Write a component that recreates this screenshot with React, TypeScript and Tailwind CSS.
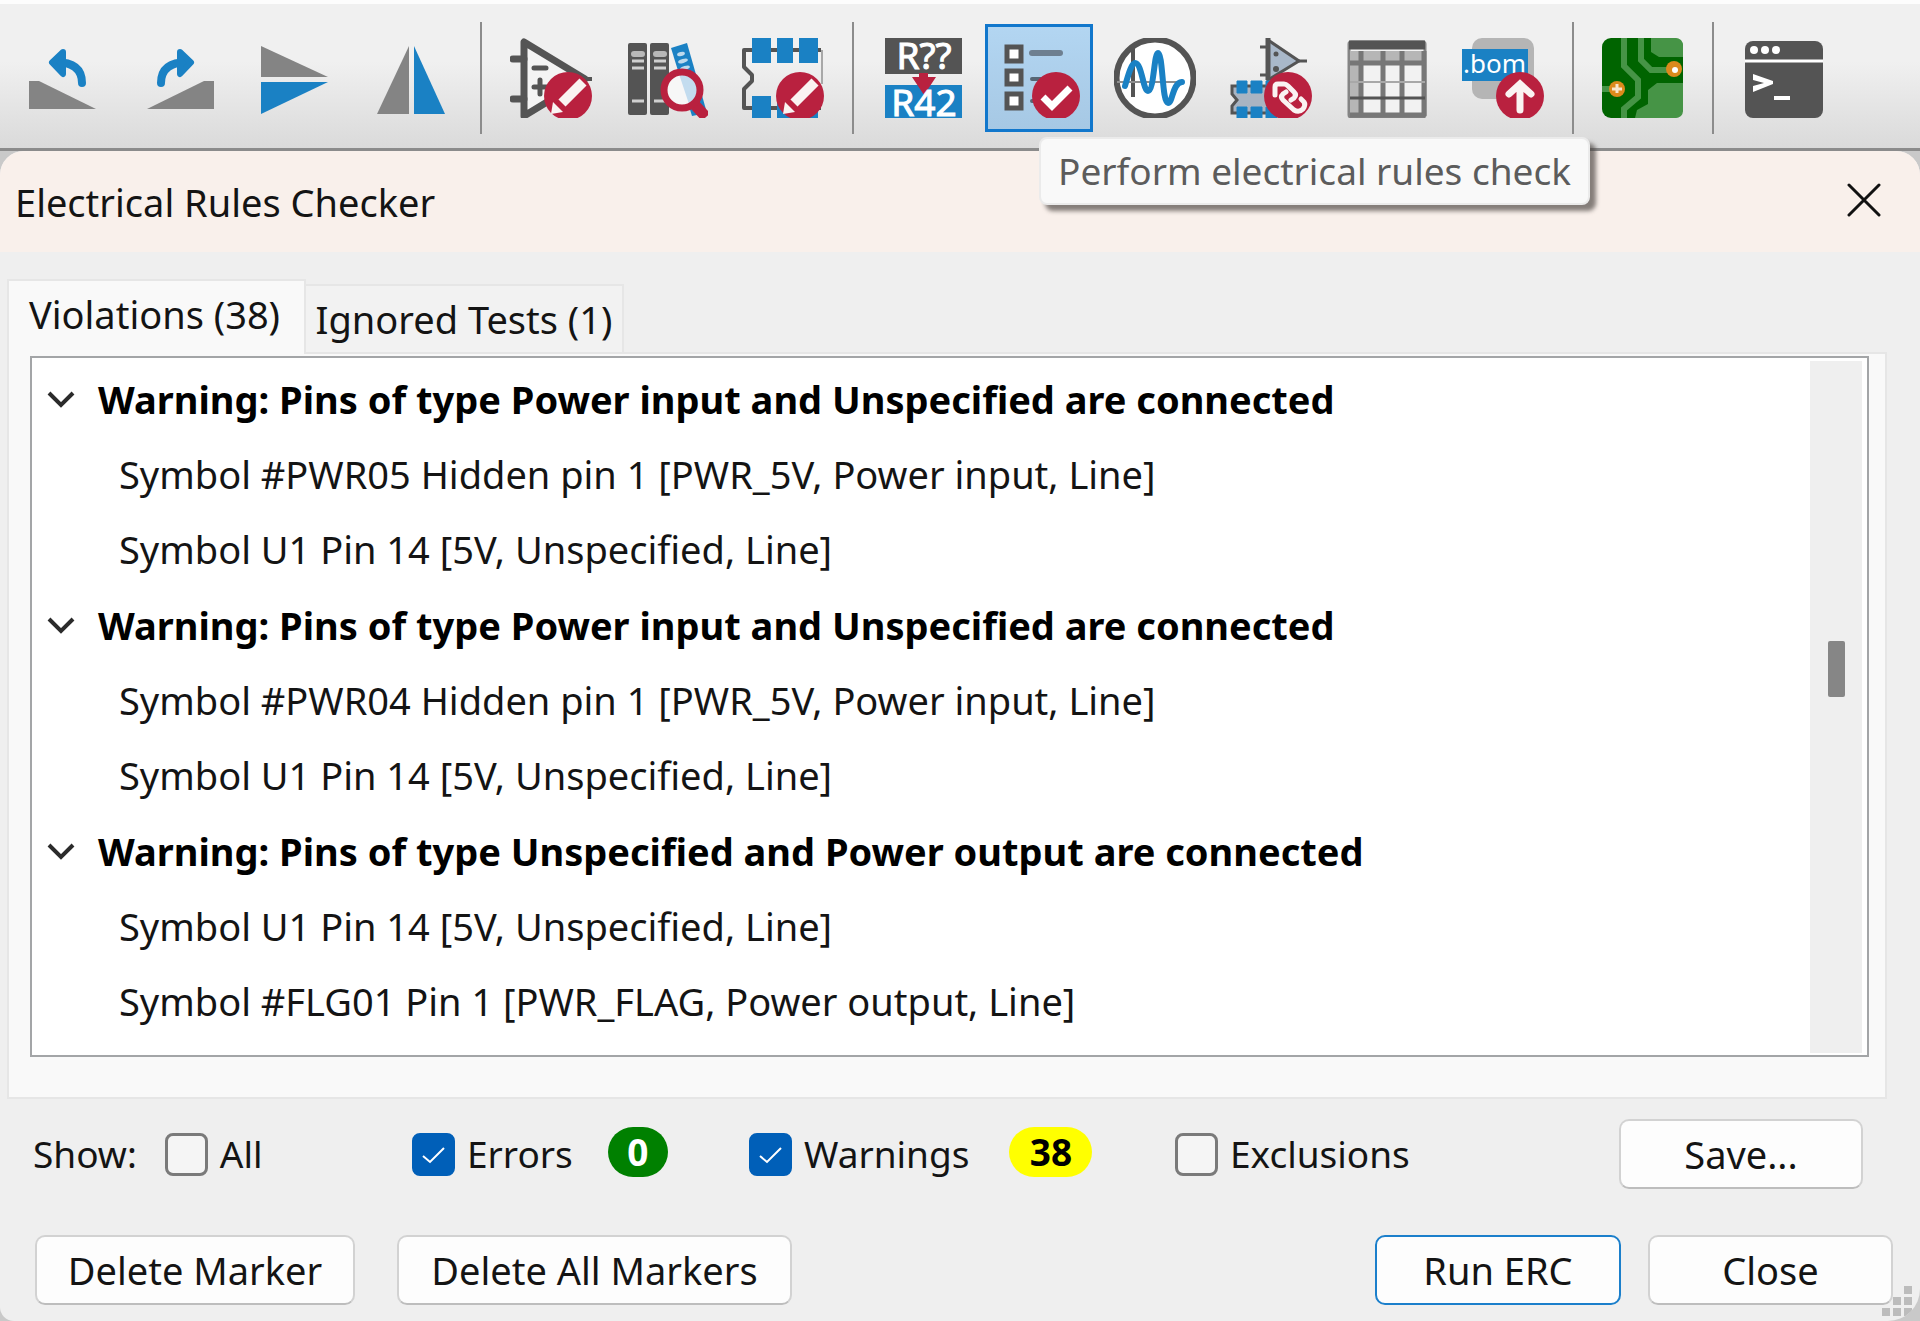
import { useState, type ReactNode } from "react";

const BLUE = "#1a81c4";
const DARK = "#545454";
const GREY = "#848484";
const RED = "#b9213f";

function Glyph({ children, overflow = "hidden" }: { children: ReactNode; overflow?: "hidden" | "visible" }) {
  return (
    <svg width="82" height="80" viewBox="13 14 82 80" fill="none" overflow={overflow} aria-hidden="true">
      {children}
    </svg>
  );
}

function Badge({ children }: { children: ReactNode }) {
  return (
    <>
      <circle cx="71" cy="72" r="24" fill={RED} />
      {children}
    </>
  );
}

function Pencil() {
  return (
    <Badge>
      <path d="M65 79 L86 58" stroke="#faf3f2" strokeWidth="10" />
      <path d="M54 90 L56 78 L66 88 Z" fill="#faf3f2" />
      <path d="M58 76 L69 87" stroke={RED} strokeWidth="2" />
    </Badge>
  );
}

function RotateShape() {
  return (
    <>
      <path d="M20 57 H30 L87 85 H20 Z" fill={GREY} />
      <path d="M73 59 C73 45 64 38 46 38" stroke={BLUE} strokeWidth="8" strokeLinecap="round" />
      <path d="M54 28 L43 38.5 L54 50 Z" fill={BLUE} stroke={BLUE} strokeWidth="6" strokeLinejoin="round" />
    </>
  );
}

const glyphs: Record<string, ReactNode> = {
  ccw: <RotateShape />,
  cw: (
    <g transform="matrix(-1 0 0 1 109 0)">
      <RotateShape />
    </g>
  ),
  mirrorV: (
    <>
      <path d="M20 22 L87 53 H20 Z" fill={GREY} />
      <path d="M20 58 H87 L20 90 Z" fill={BLUE} />
    </>
  ),
  mirrorH: (
    <>
      <path d="M52 22 V90 H20 Z" fill={GREY} />
      <path d="M57 22 V90 H88 Z" fill={BLUE} />
    </>
  ),
  symbols: (
    <>
      <path d="M27 18 V92 L88 55 Z" fill="#f4f4f4" stroke={DARK} strokeWidth="7" strokeLinejoin="round" />
      <path d="M16 35 H27 M16 75 H27" stroke={DARK} strokeWidth="7" strokeLinecap="round" />
      <path d="M37 44 H49 M37 63 H50 M43 56 V70" stroke={DARK} strokeWidth="5" strokeLinecap="round" />
      <path d="M86 55 H95" stroke={DARK} strokeWidth="4" />
      <Pencil />
    </>
  ),
  library: (
    <>
      <rect x="15" y="19" width="19" height="72" rx="2" fill={DARK} />
      <rect x="37" y="19" width="19" height="72" rx="2" fill={DARK} />
      <path d="M21 30 H29 M43 30 H51" stroke="#b8b8b8" strokeWidth="6" strokeLinecap="round" />
      <path d="M19 37 H31 M19 44 H31 M19 77 H31 M41 37 H53 M41 44 H53 M41 77 H53" stroke="#d0d0d0" strokeWidth="3" />
      <path d="M58 24 L74 19 L94 89 L79 92 Z" fill={BLUE} />
      <g fill="#bcd9ec">
        <ellipse cx="68" cy="30" rx="4" ry="2" transform="rotate(-16 68 30)" />
        <ellipse cx="70" cy="37" rx="5" ry="2" transform="rotate(-16 70 37)" />
        <ellipse cx="72" cy="44" rx="5" ry="2" transform="rotate(-16 72 44)" />
      </g>
      <path d="M81 80 L93 93" stroke={RED} strokeWidth="11" />
      <circle cx="69" cy="66" r="18" fill="#f7f7f7" />
      <path d="M66 50 A16 16 0 0 1 76 80 Z" fill="#c3dcef" />
      <circle cx="69" cy="66" r="18" stroke={RED} strokeWidth="7" />
    </>
  ),
  footprints: (
    <>
      <path d="M92 26 H15 V43 L23 51 V57 L15 65 V84 H92" stroke={DARK} strokeWidth="4" strokeLinejoin="round" />
      <path d="M93 26 V60" stroke="#a8a8a8" strokeWidth="2" />
      <path d="M23 14 H42 V39 H23 Z M48 14 H64 V39 H48 Z M70 14 H89 V39 H70 Z" fill={BLUE} />
      <path d="M23 72 H42 V94 H23 Z M48 72 H64 V94 H48 Z M70 72 H89 V94 H70 Z" fill={BLUE} />
      <Pencil />
    </>
  ),
  annotate: (
    <>
      <rect x="16" y="14" width="77" height="36" fill={DARK} />
      <rect x="16" y="61" width="77" height="33" fill={BLUE} />
      <path d="M50 49 H59 V53 H67 L55 71 L43 53 H50 Z" fill={RED} />
      <g
        fill="#ffffff"
        stroke="#ffffff"
        fontFamily="'Noto Sans', 'Open Sans', sans-serif"
        fontSize="37"
        textAnchor="middle"
      >
        <text x="55" y="45">R??</text>
        <text x="55" y="92">R42</text>
      </g>
    </>
  ),
  erc: (
    <>
      <g stroke={DARK} strokeWidth="5" fill="#ffffff">
        <rect x="22" y="23" width="14" height="14" />
        <rect x="22" y="47" width="14" height="13" />
        <rect x="22" y="70" width="14" height="14" />
      </g>
      <path d="M47 29 H75" stroke="#6e7f90" strokeWidth="6" strokeLinecap="round" />
      <path d="M47 55 H66 M47 77 H66" stroke="#566675" strokeWidth="4" strokeLinecap="round" />
      <Badge>
        <path d="M58 73 L67 82 L85 64" stroke="#ffffff" strokeWidth="7" />
      </Badge>
    </>
  ),
  simulate: (
    <>
      <circle cx="54" cy="54" r="38.5" fill="#ffffff" stroke={DARK} strokeWidth="6" />
      <path d="M32 24 V73" stroke={DARK} strokeWidth="4" />
      <path d="M16 58 H82" stroke="#8e8e8e" strokeWidth="2" />
      <path
        d="M24 62 C27 52 30 40 34 39 C41 39 42 67 47 67 C53 67 53 29 57 29 C62 29 61 79 67 79 C72 79 71 59 81 58"
        stroke={BLUE}
        strokeWidth="6"
        strokeLinecap="round"
      />
    </>
  ),
  assign: (
    <>
      <path d="M51 16 V56 L82 37 Z" fill="#a9b8c9" stroke={DARK} strokeWidth="3" />
      <path d="M51 14 V56" stroke={DARK} strokeWidth="5" />
      <path d="M82 37 H90 M43 23 H51 M43 51 H51" stroke={DARK} strokeWidth="3" />
      <circle cx="59" cy="30" r="2.5" fill={DARK} />
      <circle cx="59" cy="45" r="3" fill={DARK} />
      <path d="M70 62 H15 V70 L20 76 L15 82 V89 H70 Z" fill="#a9b4c2" />
      <path d="M70 62 H15 V70 L20 76 L15 82 V89 H70" stroke={DARK} strokeWidth="3" />
      <path
        d="M20 57 H30 V69 H20 Z M34 57 H45 V69 H34 Z M49 57 H60 V69 H49 Z M20 83 H30 V94 H20 Z M34 83 H45 V94 H34 Z M49 83 H60 V94 H49 Z"
        fill={BLUE}
        stroke={BLUE}
      />
      <Badge>
        <g stroke="#faf3f2" strokeWidth="5" strokeLinecap="round">
          <path d="M58 71 V63 Q58 60 61 60 H67 Q69 60 71 62 L77 68 Q80 71 77 74 L74 76" />
          <path d="M84 75 L87 78 Q89 81 86 85 Q82 89 77 86 L66 76 Q63 73 66 70 L69 68" />
        </g>
      </Badge>
    </>
  ),
  table: (
    <>
      <rect x="16" y="18" width="76" height="75" rx="2" fill="#f2f2f2" stroke={GREY} strokeWidth="3" />
      <path d="M17 27 H91 V38 H17 Z M17 38 H27 V91 H17 Z" fill="#b6b6b6" />
      <path d="M16 21 H92" stroke={DARK} strokeWidth="9" />
      <path d="M28 27 V92 M50 27 V92 M69 27 V92 M91 27 V92" stroke="#777777" strokeWidth="5" />
      <path d="M17 39 H92 M17 91 H92" stroke="#777777" strokeWidth="5" />
      <path d="M17 58 H92" stroke="#a8a8a8" strokeWidth="2" />
      <path d="M17 74 H92" stroke={DARK} strokeWidth="3" />
    </>
  ),
  bom: (
    <>
      <rect x="23" y="14" width="62" height="61" rx="10" fill="#b5b5b5" />
      <rect x="13" y="25" width="66" height="32" fill={BLUE} />
      <text x="14" y="49" fill="#ffffff" fontFamily="'Noto Sans', 'Open Sans', sans-serif" fontSize="26">
        .bom
      </text>
      <Badge>
        <path d="M71 86 V61 M60 70 L71 60 L82 70" stroke="#faf3f2" strokeWidth="7" strokeLinecap="round" />
      </Badge>
    </>
  ),
  pcb: (
    <>
      <rect x="13" y="14" width="81" height="80" rx="9" fill="#006400" />
      <path
        d="M62 14 H86 Q94 14 94 22 V33 H70 L62 28 Z M94 59 H68 L59 66 V80 L48 86 L46 94 H86 Q94 94 94 86 Z"
        fill="#469446"
      />
      <path d="M35 14 V42 L49 56 V73 L35 85 V94 M52 14 V36 L62 46 H78 M13 65 H22" stroke="#469446" strokeWidth="6" />
      <circle cx="85" cy="45" r="8" fill="#dc8a1c" />
      <circle cx="28" cy="65" r="8" fill="#dc8a1c" />
      <circle cx="86" cy="46" r="3" fill="#ffffff" />
      <path d="M23 65 H33 M28 60 V69" stroke="#f8e6cc" strokeWidth="3" />
    </>
  ),
  terminal: (
    <>
      <rect x="16" y="17" width="78" height="77" rx="8" fill={DARK} />
      <g fill="#ffffff">
        <circle cx="25" cy="26" r="4" />
        <circle cx="36" cy="26" r="4" />
        <circle cx="47" cy="26" r="4" />
      </g>
      <path d="M16 37 H94" stroke="#ffffff" strokeWidth="3" />
      <path d="M24 50 L44 57 V60 L24 68 V62 L35 59 L24 56 Z" fill="#ffffff" />
      <path d="M45 74 H61" stroke="#ffffff" strokeWidth="4" />
    </>
  ),
};

const toolGroups: { id: string; label: string }[][] = [
  [
    { id: "ccw", label: "Rotate counterclockwise" },
    { id: "cw", label: "Rotate clockwise" },
    { id: "mirrorV", label: "Mirror vertically" },
    { id: "mirrorH", label: "Mirror horizontally" },
  ],
  [
    { id: "symbols", label: "Symbol editor" },
    { id: "library", label: "Symbol library browser" },
    { id: "footprints", label: "Footprint editor" },
  ],
  [
    { id: "annotate", label: "Annotate schematic" },
    { id: "erc", label: "Perform electrical rules check" },
    { id: "simulate", label: "Simulator" },
    { id: "assign", label: "Assign footprints" },
    { id: "table", label: "Symbol fields table" },
    { id: "bom", label: "Generate bill of materials" },
  ],
  [{ id: "pcb", label: "Open PCB editor" }],
  [{ id: "terminal", label: "Scripting console" }],
];

function Toolbar() {
  return (
    <div
      role="toolbar"
      className="flex items-center gap-[15px] border-t-4 border-b-3 border-t-[#fdfdfd] border-b-[#8b8b8b] bg-linear-to-b from-[#f0f0f0] from-40% to-[#dadada] pt-[18px] pb-[14px] pl-[9px]"
    >
      {toolGroups.map((group, index) => (
        <div key={index} className="flex items-center gap-[15px]">
          {index > 0 && <div className="h-[112px] w-[2px] bg-[#8c8c8c]" />}
          <div className="flex gap-2">
            {group.map((tool) => (
              <div key={tool.id} className="relative">
                <button
                  type="button"
                  aria-label={tool.label}
                  className={
                    tool.id === "erc"
                      ? "grid size-[108px] place-items-center bg-linear-to-b from-[#b3d6f2] to-[#a6c8e4] inset-ring-3 inset-ring-[#1177cc]"
                      : "grid size-[108px] place-items-center"
                  }
                >
                  <Glyph overflow={tool.id === "annotate" ? "visible" : "hidden"}>{glyphs[tool.id]}</Glyph>
                </button>
                {tool.id === "erc" && (
                  <div
                    role="tooltip"
                    className="absolute top-[113px] left-[54px] z-10 rounded-lg border-2 border-[#ebebeb] bg-[#f9f9f9] px-[17px] text-[37px] leading-[64px] whitespace-nowrap text-[#5c5c5c] shadow-[6px_6px_4px_rgba(70,65,62,0.65)]"
                  >
                    {tool.label}
                  </div>
                )}
              </div>
            ))}
          </div>
        </div>
      ))}
    </div>
  );
}

const violations = [
  {
    title: "Warning: Pins of type Power input and Unspecified are connected",
    items: ["Symbol #PWR05 Hidden pin 1 [PWR_5V, Power input, Line]", "Symbol U1 Pin 14 [5V, Unspecified, Line]"],
  },
  {
    title: "Warning: Pins of type Power input and Unspecified are connected",
    items: ["Symbol #PWR04 Hidden pin 1 [PWR_5V, Power input, Line]", "Symbol U1 Pin 14 [5V, Unspecified, Line]"],
  },
  {
    title: "Warning: Pins of type Unspecified and Power output are connected",
    items: ["Symbol U1 Pin 14 [5V, Unspecified, Line]", "Symbol #FLG01 Pin 1 [PWR_FLAG, Power output, Line]"],
  },
];

function ViolationTree() {
  return (
    <div className="flex flex-1 border-2 border-[#a3a5a7] bg-white">
      <ul className="flex-1 pt-[3px]">
        {violations.map((violation, index) => (
          <li key={index}>
            <button type="button" aria-expanded="true" className="flex h-[76px] items-center pl-[13px] font-bold text-black">
              <svg width="32" height="24" viewBox="0 0 32 24" fill="none" className="mr-[21px]" aria-hidden="true">
                <path d="M4 6 L16 18 L28 6" stroke="#2b2b2b" strokeWidth="4" />
              </svg>
              {violation.title}
            </button>
            <ul>
              {violation.items.map((item) => (
                <li key={item} className="pl-[87px] leading-[75px]">
                  {item}
                </li>
              ))}
            </ul>
          </li>
        ))}
      </ul>
      <div className="mt-[3px] mr-[5px] mb-[2px] flex w-[52px] flex-col items-center bg-[#efefef]">
        <div className="mt-[280px] h-[56px] w-[17px] rounded-xs bg-[#868686]" />
      </div>
    </div>
  );
}

function Check({ label, initial = false }: { label: string; initial?: boolean }) {
  const [checked, setChecked] = useState(initial);
  return (
    <label className="flex items-center gap-3">
      <span className="grid">
        <input
          type="checkbox"
          checked={checked}
          onChange={(event) => setChecked(event.target.checked)}
          className="col-start-1 row-start-1 size-[43px] appearance-none rounded-lg border-3 border-[#7a7a7a] bg-[#f5f5f5] checked:border-[#005fb8] checked:bg-[#005fb8]"
        />
        {checked && (
          <svg
            width="43"
            height="43"
            viewBox="0 0 43 43"
            fill="none"
            className="pointer-events-none col-start-1 row-start-1"
            aria-hidden="true"
          >
            <path d="M11 23 L18 29 L32 15" stroke="#ffffff" strokeWidth="2" />
          </svg>
        )}
      </span>
      <span>{label}</span>
    </label>
  );
}

function PushButton({ children, width, primary = false }: { children: string; width: string; primary?: boolean }) {
  return (
    <button
      type="button"
      className={`${width} h-[70px] rounded-[10px] border-2 bg-[#fdfdfd] text-center ${
        primary ? "border-[#1b7fcb]" : "border-[#d2d2d2] border-b-[#bdbdbd]"
      }`}
    >
      {children}
    </button>
  );
}

export default function App() {
  return (
    <div className="flex min-h-screen flex-col bg-[#c9c9c9] font-['Noto_Sans','Open_Sans',sans-serif] text-[38px] leading-[50px] text-[#141414]">
      <Toolbar />
      <main className="relative flex flex-1 flex-col overflow-hidden rounded-t-[24px] rounded-br-[32px] rounded-bl-[14px] bg-[#efefef]">
        <header className="flex h-[101px] items-center justify-between bg-[#f9f0eb] pr-[39px] pl-[15px]">
          <h1>Electrical Rules Checker</h1>
          <button type="button" aria-label="Close dialog">
            <svg width="34" height="34" viewBox="0 0 34 34" fill="none" className="mb-[3px]" aria-hidden="true">
              <path d="M2 2 L32 32 M32 2 L2 32" stroke="#111111" strokeWidth="3" strokeLinecap="round" />
            </svg>
          </button>
        </header>

        <div className="flex flex-1 flex-col pt-[27px] pr-[33px] pl-[7px]">
          <div role="tablist" className="flex items-end">
            <button
              type="button"
              role="tab"
              aria-selected="true"
              className="z-1 -mb-[2px] h-[75px] w-[299px] border-2 border-b-0 border-[#e6e6e6] bg-[#f9f9f9] pr-1 pb-[7px]"
            >
              Violations (38)
            </button>
            <button
              type="button"
              role="tab"
              aria-selected="false"
              className="h-[68px] w-[318px] border-2 border-b-0 border-l-0 border-[#e6e6e6] bg-[#f2f2f2]"
            >
              Ignored Tests (1)
            </button>
          </div>
          <div
            role="tabpanel"
            className="flex flex-1 flex-col border-2 border-[#e6e6e6] bg-[#f9f9f9] pt-[2px] pr-[16px] pb-[40px] pl-[21px]"
          >
            <ViolationTree />
          </div>
        </div>

        <div className="flex items-center pt-[20px] pr-[57px] pl-[33px] text-[37px]">
          <div className="flex w-[379px] items-center gap-[28px]">
            <span>Show:</span>
            <Check label="All" />
          </div>
          <div className="flex w-[337px] items-center gap-[35px]">
            <Check label="Errors" initial />
            <span className="mb-1 h-[50px] w-[60px] rounded-full bg-[#008000] text-center font-bold text-white">0</span>
          </div>
          <div className="flex w-[426px] items-center gap-[40px]">
            <Check label="Warnings" initial />
            <span className="mb-1 h-[50px] w-[83px] rounded-full bg-[#ffff00] text-center font-bold text-black">38</span>
          </div>
          <Check label="Exclusions" />
          <div className="ml-auto flex text-[38px]">
            <PushButton width="w-[244px]">Save...</PushButton>
          </div>
        </div>

        <div className="flex items-center pt-[46px] pr-[27px] pb-[16px] pl-[35px]">
          <PushButton width="w-[320px]">Delete Marker</PushButton>
          <div className="ml-[42px] flex">
            <PushButton width="w-[395px]">Delete All Markers</PushButton>
          </div>
          <div className="ml-auto flex gap-[27px]">
            <PushButton width="w-[246px]" primary>
              Run ERC
            </PushButton>
            <PushButton width="w-[245px]">Close</PushButton>
          </div>
        </div>

        <svg width="30" height="30" viewBox="0 0 30 30" className="absolute right-[8px] bottom-[5px]" aria-hidden="true">
          <path
            d="M22 0h8v8h-8z M11 11h8v8h-8z M22 11h8v8h-8z M0 22h8v8h-8z M11 22h8v8h-8z M22 22h8v8h-8z"
            fill="#bcbcbc"
          />
        </svg>
      </main>
    </div>
  );
}
